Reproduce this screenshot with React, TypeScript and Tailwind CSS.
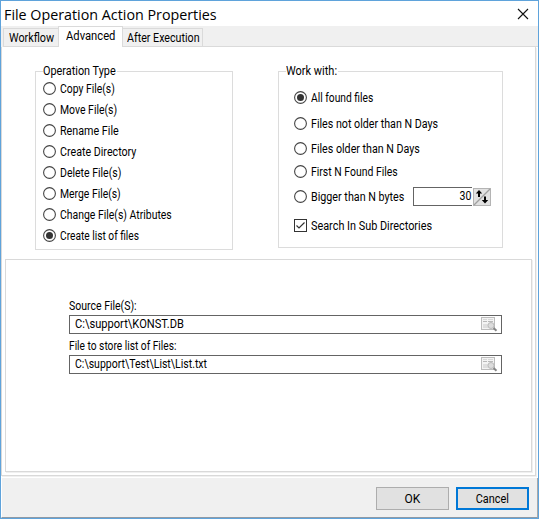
import type { ReactNode } from "react";

const operations = [
  { label: "Copy File(s)", fit: "scale-x-[.865]" },
  { label: "Move File(s)", fit: "scale-x-[.87]" },
  { label: "Rename File", fit: "scale-x-[.895]" },
  { label: "Create Directory", fit: "scale-x-[.89]" },
  { label: "Delete File(s)", fit: "scale-x-[.875]" },
  { label: "Merge File(s)", fit: "scale-x-[.865]" },
  { label: "Change File(s) Atributes", fit: "scale-x-[.87]" },
  { label: "Create list of files", fit: "scale-x-[.85]", checked: true },
];

function Text({ children, fit }: { children: ReactNode; fit: string }) {
  return <span className={`inline-block origin-left ${fit}`}>{children}</span>;
}

function Radio({ checked }: { checked?: boolean }) {
  return (
    <svg className="size-[13px] shrink-0" viewBox="0 0 13 13">
      <circle cx="6.5" cy="6.5" r="5.9" fill="#fff" stroke="#444" strokeWidth="1.1" />
      {checked && <circle cx="6.5" cy="6.5" r="3.5" fill="#333" />}
    </svg>
  );
}

type OptionProps = { label: string; fit: string; checked?: boolean; className?: string };

function Option({ label, fit, checked, className = "" }: OptionProps) {
  return (
    <div className={`flex items-center gap-[3.5px] ${className}`}>
      <Radio checked={checked} />
      <Text fit={fit}>{label}</Text>
    </div>
  );
}

function Group({ title, className, children }: { title: ReactNode; className: string; children: ReactNode }) {
  return (
    <fieldset className={`border border-[#dcdcdc] ${className}`}>
      {title}
      {children}
    </fieldset>
  );
}

function BrowseIcon() {
  return (
    <svg className="h-[15px] w-[17px]" viewBox="0 0 17 15">
      <rect x="0.5" y="0.5" width="13" height="12" fill="#f3f3f3" stroke="#bcbcbc" />
      <path d="M2 2.5h4M7 2.5h5" stroke="#d8d8d8" />
      <path d="M2 4.5h4M7 4.5h5" stroke="#b8b8b8" />
      <path d="M2 7h5v4H2z" fill="#dedede" />
      <circle cx="10" cy="8.5" r="3" fill="#dcdcdc" stroke="#bababa" />
      <path d="M12.5 11l3 2.8" stroke="#858585" strokeWidth="2" />
    </svg>
  );
}

type FieldProps = { label: string; labelFit: string; value: string; valueFit: string };

function FileField({ label, labelFit, value, valueFit }: FieldProps) {
  return (
    <div className="h-[40px] w-[433px]">
      <div className="h-[16px] leading-[14px]">
        <Text fit={labelFit}>{label}</Text>
      </div>
      <div className="flex h-[19px] items-center justify-between border border-[#646464] pr-[3px] pb-px pl-[5px]">
        <Text fit={valueFit}>{value}</Text>
        <BrowseIcon />
      </div>
    </div>
  );
}

export default function App() {
  return (
    <div className="flex h-[519px] w-[539px] flex-col overflow-hidden border border-[#5fa3db] bg-white font-['Roboto','Liberation_Sans',sans-serif] text-[12px] leading-[14px] whitespace-nowrap text-black">
      <header className="flex h-[25px] shrink-0 items-center justify-between pr-[9px] pl-[3px]">
        <h1 className="origin-left scale-x-[.953] font-['Open_Sans','Noto_Sans',sans-serif] text-[15px] leading-[24px]">
          File Operation Action Properties
        </h1>
        <svg className="size-[12px]" viewBox="0 0 12 12">
          <path d="M1 1l10 10M11 1L1 11" stroke="#111" strokeWidth="1.1" />
        </svg>
      </header>

      <nav className="flex h-[21px] shrink-0 items-end bg-[#f0f0f0] pl-[2px]">
        <div className="flex h-[19px] w-[55px] items-center border border-r-0 border-[#dadada] pl-[5px]">
          <Text fit="scale-x-[.9]">Workflow</Text>
        </div>
        <div className="flex h-[21px] w-[65px] items-center border border-b-0 border-[#dadada] bg-white pb-[2px] pl-[7px]">
          <Text fit="scale-x-[.935]">Advanced</Text>
        </div>
        <div className="flex h-[19px] w-[80px] items-center border border-l-0 border-[#dadada] pl-[4px]">
          <Text fit="scale-x-[.89]">After Execution</Text>
        </div>
        <div className="h-px flex-1 bg-[#dadada]" />
      </nav>

      <div className="h-[431px] shrink-0">
        <main className="flex h-[429px] w-[535px] flex-col border-r border-b border-l border-[#d9d9d9] bg-white px-[3px] shadow-[1px_1px_0_#f0f0f0]">
          <div className="flex h-[212px] shrink-0 pt-[17px] pl-[30px]">
            <Group
              title={
                <legend className="ml-[7px] h-[14px] w-[74px]">
                  <Text fit="scale-x-[.905]">Operation Type</Text>
                </legend>
              }
              className="mr-[45px] h-[186px] w-[198px]"
            >
              <div className="flex flex-col pl-[7px]">
                {operations.map((o) => (
                  <Option key={o.label} {...o} className="h-[21px]" />
                ))}
              </div>
            </Group>
            <Group
              title={
                <legend className="ml-[7px] h-[14px] w-[52px]">
                  <Text fit="scale-x-[.915]">Work with:</Text>
                </legend>
              }
              className="h-[184px] w-[225px]"
            >
              <div className="flex flex-col pt-[8px] pl-[15px]">
                <Option label="All found files" fit="scale-x-[.855]" checked className="h-[23px]" />
                <Option label="Files not older than N Days" fit="scale-x-[.89]" className="h-[29px]" />
                <Option label="Files older than N Days" fit="scale-x-[.89]" className="h-[21px]" />
                <Option label="First N Found Files" fit="scale-x-[.87]" className="h-[25px]" />
                <div className="flex h-[25px] items-center">
                  <Option label="Bigger than N bytes" fit="scale-x-[.895]" className="w-[119px]" />
                  <div className="flex h-[19px] w-[59px] items-center justify-end border border-r-0 border-[#646464] pr-px pb-px">
                    <span className="origin-right scale-x-[.88]">30</span>
                  </div>
                  <svg className="mt-[1px] ml-px size-[18px]" viewBox="0 0 18 18">
                    <rect x="0.5" y="0.5" width="17" height="17" fill="#e1e1e1" stroke="#b4b4b4" />
                    <path d="M1 17L17 1" stroke="#a0a0a0" strokeWidth="1.2" />
                    <path d="M6 2l3.2 3.5H7V9H5V5.500H2.800zM12 15.500l-3.200-3.500H11V8.500h2V12h2.200z" fill="#000" />
                  </svg>
                </div>
                <div className="flex h-[33px] items-center gap-1">
                  <svg className="size-[13px]" viewBox="0 0 13 13">
                    <rect x="0.5" y="0.5" width="12" height="12" fill="#fff" stroke="#333" />
                    <path d="M2.500 6.500L5 9l5.500-5.500" fill="none" stroke="#333" strokeWidth="1.2" />
                  </svg>
                  <Text fit="scale-x-[.905]">Search In Sub Directories</Text>
                </div>
              </div>
            </Group>
          </div>
          <section className="h-[213px] w-[527px] shrink-0 border border-[#d9d9d9] pt-[39px] pl-[63px] shadow-[1px_1px_0_#f0f0f0]">
            <FileField label="Source File(S):" labelFit="scale-x-[.875]" value="C:\support\KONST.DB" valueFit="scale-x-[.925]" />
            <FileField
              label="File to store list of Files:"
              labelFit="scale-x-[.85]"
              value="C:\support\Test\List\List.txt"
              valueFit="scale-x-[.875]"
            />
          </section>
        </main>
      </div>

      <footer className="flex min-h-0 flex-1 justify-end gap-[7px] border-r border-b border-l border-r-[#a9a9a9] border-b-[#8f9aa5] border-l-white bg-[#f0f0f0] pt-[9px] pr-[8px]">
        <button className="h-[23px] w-[73px] border border-[#adadad] bg-[#e1e1e1]">OK</button>
        <button className="h-[23px] w-[73px] border-2 border-[#0078d7] bg-[#e1e1e1]">
          <span className="inline-block scale-x-[.91]">Cancel</span>
        </button>
      </footer>
    </div>
  );
}
